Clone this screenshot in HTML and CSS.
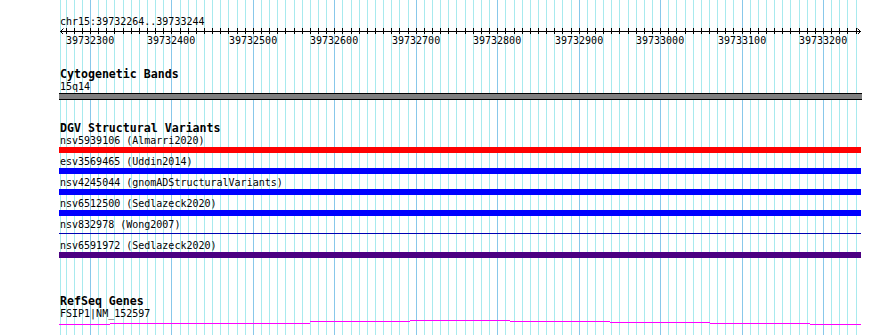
FILE: index.html
```html
<!DOCTYPE html>
<html>
<head>
<meta charset="utf-8">
<title>chr15:39732264..39733244</title>
<link rel="stylesheet" href="styles.css">
</head>
<body>
<div class="panel">
  <svg class="grid" id="grid" width="890" height="335" shape-rendering="crispEdges"></svg>
  <div class="content">
    <section class="ruler-track">
      <div class="small">chr15:39732264..39733244</div>
      <svg class="ruler" id="ruler" width="802" height="6" shape-rendering="crispEdges"></svg>
      <div class="ruler-labels">
        <span class="tick-label" style="left:66px">39732300</span>
        <span class="tick-label" style="left:147px">39732400</span>
        <span class="tick-label" style="left:229px">39732500</span>
        <span class="tick-label" style="left:310px">39732600</span>
        <span class="tick-label" style="left:392px">39732700</span>
        <span class="tick-label" style="left:473px">39732800</span>
        <span class="tick-label" style="left:555px">39732900</span>
        <span class="tick-label" style="left:636px">39733000</span>
        <span class="tick-label" style="left:718px">39733100</span>
        <span class="tick-label" style="left:799px">39733200</span>
      </div>
    </section>

    <section class="track cyto">
      <div class="title">Cytogenetic Bands</div>
      <div class="small">15q14</div>
      <div class="band"></div>
    </section>

    <section class="track dgv">
      <div class="title">DGV Structural Variants</div>
      <div class="features">
        <div class="feature"><div class="small">nsv5939106 (Almarri2020)</div><div class="bar red"></div></div>
        <div class="feature"><div class="small">esv3569465 (Uddin2014)</div><div class="bar blue"></div></div>
        <div class="feature"><div class="small">nsv4245044 (gnomADStructuralVariants)</div><div class="bar blue"></div></div>
        <div class="feature"><div class="small">nsv6512500 (Sedlazeck2020)</div><div class="bar blue"></div></div>
        <div class="feature"><div class="small">nsv832978 (Wong2007)</div><div class="bar thin"></div></div>
        <div class="feature"><div class="small">nsv6591972 (Sedlazeck2020)</div><div class="bar purple"></div></div>
      </div>
    </section>

    <section class="track refseq">
      <div class="title">RefSeq Genes</div>
      <div class="small">FSIP1|NM_152597</div>
      <svg class="gene" width="802" height="6" shape-rendering="crispEdges">
        <path d="M0 4.5H51M51 3.5H251M251 1.5H351M351 0.5H451M451 1.5H551M551 2.5H651M651 3.5H751M751 4.5H802" stroke="#ff00ff" stroke-width="1" fill="none"/>
      </svg>
    </section>
  </div>
</div>
<script src="script.js"></script>
</body>
</html>
```

FILE: styles.css
```css
html, body {
  margin: 0;
  padding: 0;
  background: #ffffff;
}

.panel {
  position: relative;
  width: 890px;
  height: 335px;
  overflow: hidden;
  background: #ffffff;
  color: #000000;
  font-family: "DejaVu Sans Mono", "Liberation Mono", monospace;
}

.grid {
  position: absolute;
  left: 0;
  top: 0;
  z-index: 0;
}

.content {
  position: relative;
  z-index: 1;
  padding: 15px 0 0 60px;
}

.small {
  font-size: 10px;
  line-height: 13px;
  height: 13px;
  white-space: pre;
}

.title {
  font-size: 11.6px;
  font-weight: bold;
  line-height: 12px;
  height: 12px;
  white-space: pre;
}

.ruler {
  display: block;
  margin-left: -1px;
}

.ruler-labels {
  position: relative;
  margin-left: -60px;
  height: 13px;
  font-size: 10px;
  line-height: 13px;
}

.tick-label {
  position: absolute;
  top: 0;
  white-space: pre;
}

.cyto {
  margin-top: 21px;
}

.band {
  margin-left: -1px;
  width: 803px;
  height: 5px;
  background: #808080;
  border-top: 1px solid #000000;
  border-bottom: 1px solid #000000;
}

.dgv {
  margin-top: 22px;
}

.features {
  display: flex;
  flex-direction: column;
  gap: 2px;
}

.bar {
  margin-left: -1px;
  width: 802px;
  height: 6px;
}

.bar.red { background: #ff0000; }
.bar.blue { background: #0000ff; }
.bar.purple { background: #4b0082; }

.bar.thin {
  height: 1px;
  margin-top: 2px;
  margin-bottom: 3px;
  background: #0000b4;
}

.refseq {
  margin-top: 37px;
}

.gene {
  display: block;
  margin-left: -1px;
}
```

FILE: script.js
```js
(function () {
  var NS = 'http://www.w3.org/2000/svg';
  var start = 39732264;
  function px(p) { return Math.round(60.7 + (p - start) * 0.8144); }

  var grid = document.getElementById('grid');
  var ruler = document.getElementById('ruler');

  function line(svg, x1, y1, x2, y2, color) {
    var l = document.createElementNS(NS, 'line');
    l.setAttribute('x1', x1);
    l.setAttribute('y1', y1);
    l.setAttribute('x2', x2);
    l.setAttribute('y2', y2);
    l.setAttribute('stroke', color);
    l.setAttribute('stroke-width', '1');
    svg.appendChild(l);
  }

  // left edge line
  line(grid, 60.5, 0, 60.5, 335, '#a8eaee');

  for (var p = 39732270; p <= 39733240; p += 10) {
    var x = px(p);
    var major = (p % 100 === 0);
    line(grid, x + 0.5, 0, x + 0.5, 335, major ? '#88c8ea' : '#a8eaee');
    // ruler tick (ruler svg starts at page x 59)
    var rx = x - 59 + 0.5;
    line(ruler, rx, 0, rx, 6, '#000000');
  }

  // ruler axis line: page x 60..860 at y 31
  line(ruler, 1, 3.5, 802, 3.5, '#000000');
  // arrowheads
  var a1 = document.createElementNS(NS, 'path');
  a1.setAttribute('d', 'M4.5 0.5L1.5 3.5L4.5 6.5M798.5 0.5L801.5 3.5L798.5 6.5');
  a1.setAttribute('stroke', '#000000');
  a1.setAttribute('fill', 'none');
  a1.setAttribute('stroke-width', '1');
  a1.setAttribute('shape-rendering', 'auto');
  ruler.appendChild(a1);
})();
```
